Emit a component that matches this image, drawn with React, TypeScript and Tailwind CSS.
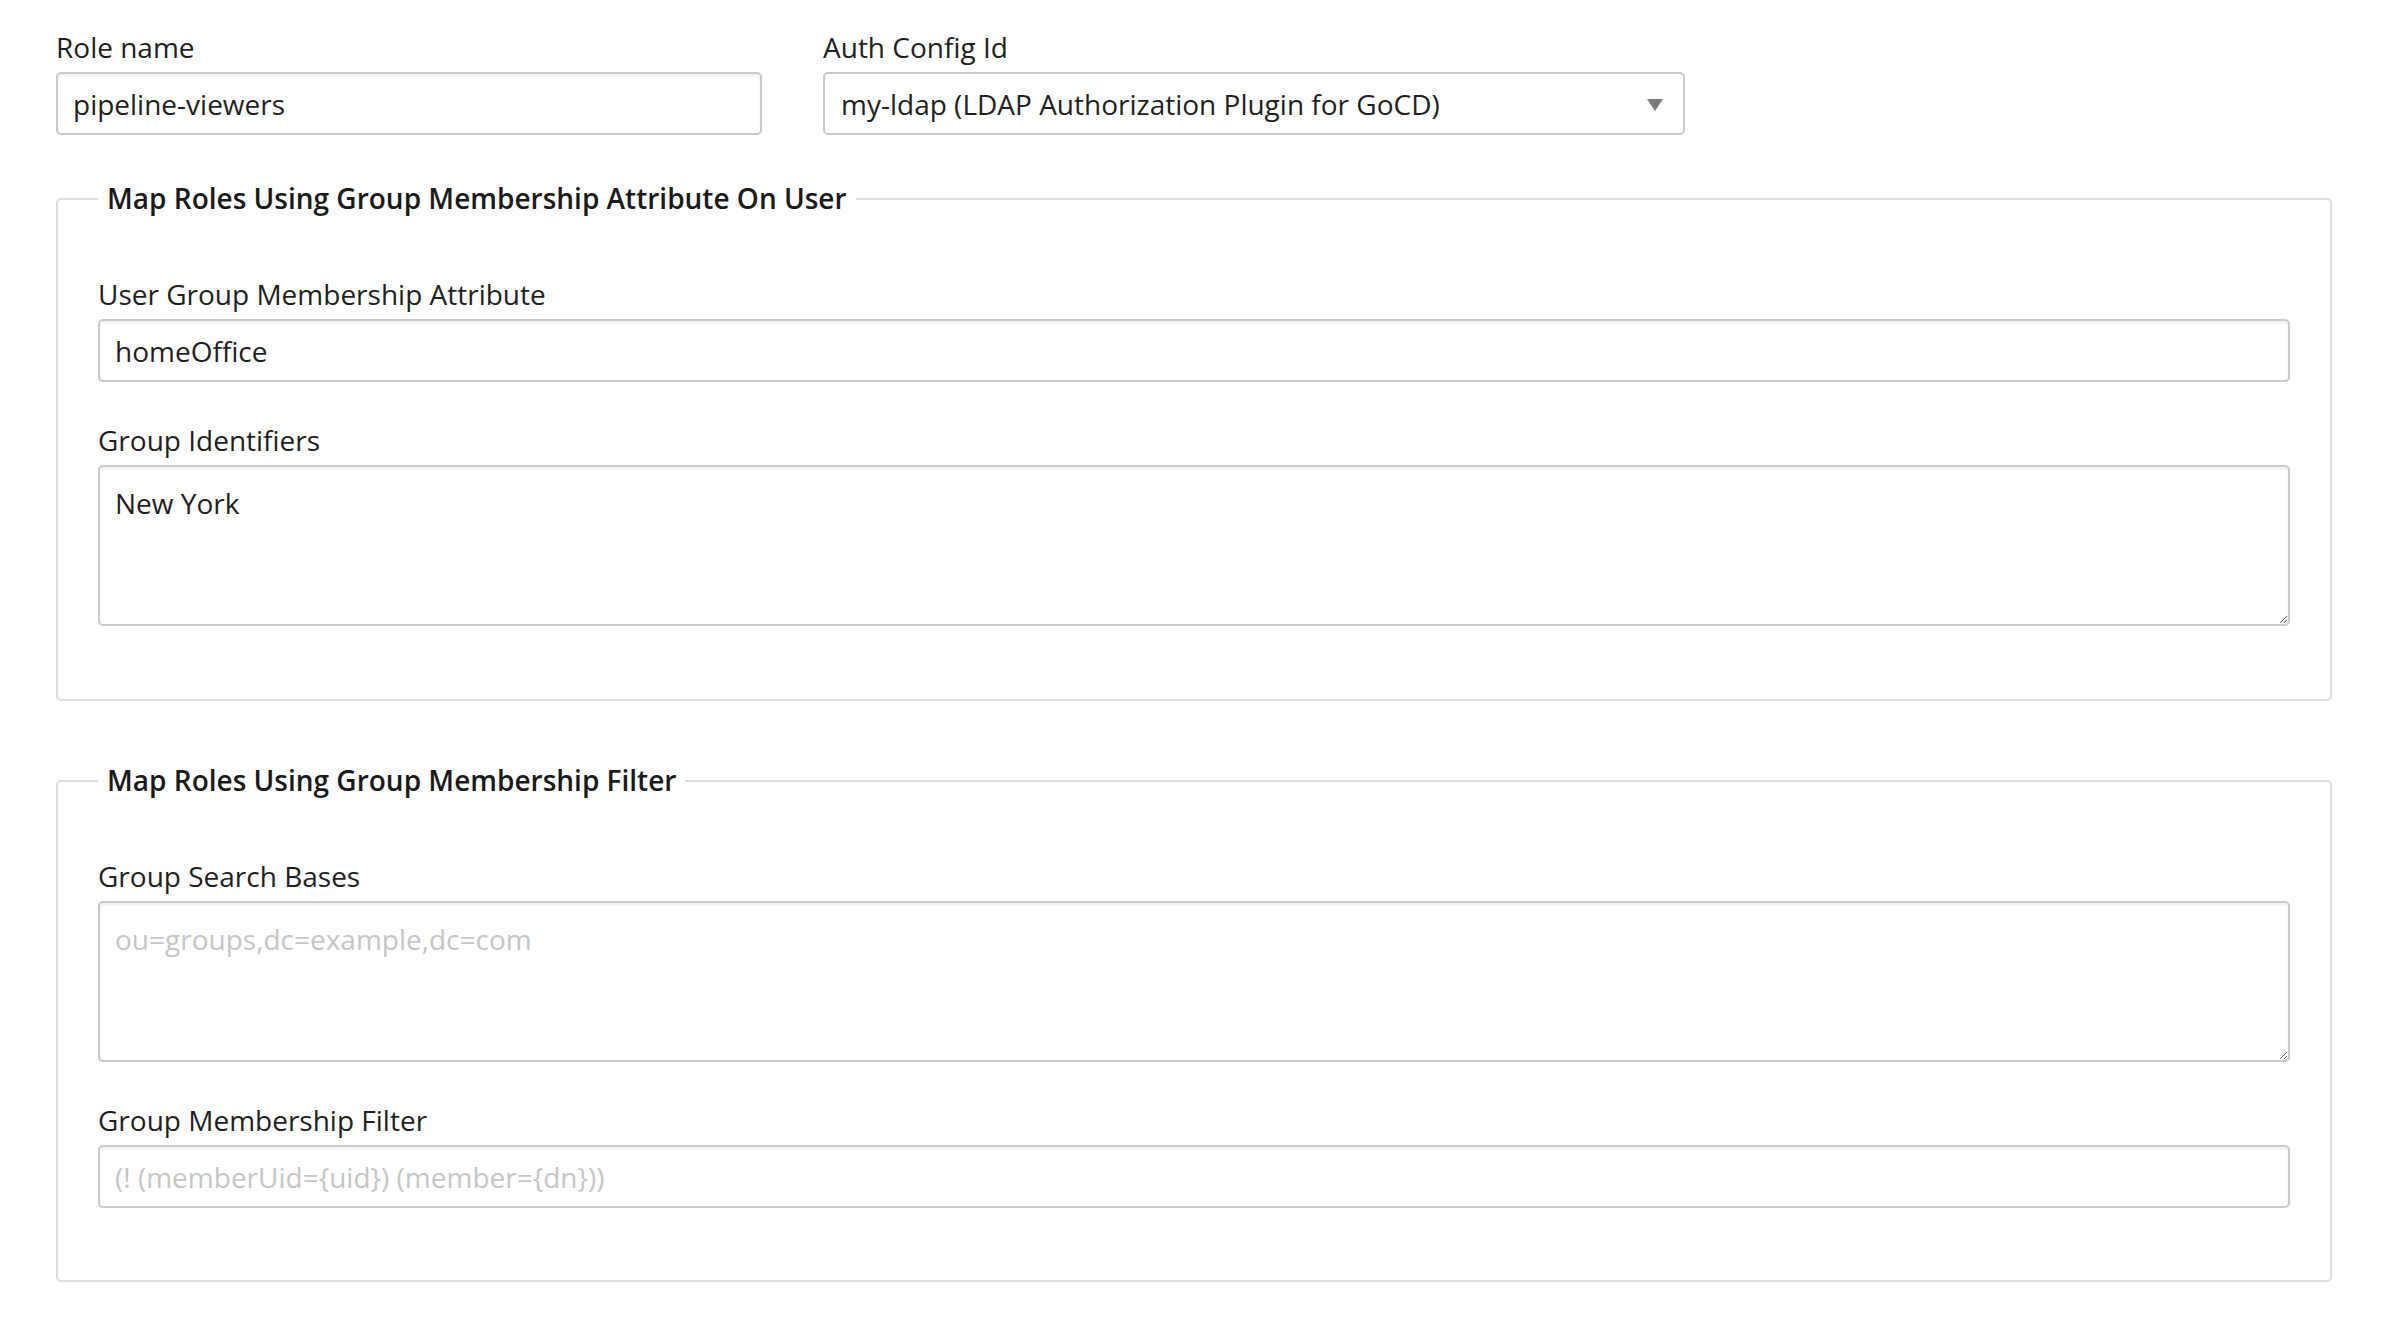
import React from "react";

const font = { fontFamily: '"Open Sans", "Noto Sans", "Liberation Sans", sans-serif' };

function Label({ children }: { children: React.ReactNode }) {
  return (
    <label className="block text-[28px] leading-[38px] text-[#1f1f1f] mb-[6px]">{children}</label>
  );
}

const inputCls =
  "block w-full h-[63px] rounded-[5px] border-2 border-[#cacaca] bg-white px-[15px] text-[28px] text-[#1f1f1f] shadow-[inset_0_2px_3px_rgba(0,0,0,0.07)] outline-none placeholder:text-[#c6c6c6]";

const textareaCls =
  "block w-full h-[161px] rounded-[5px] border-2 border-[#cacaca] bg-white px-[15px] py-[17px] text-[28px] leading-[38px] text-[#1f1f1f] shadow-[inset_0_2px_3px_rgba(0,0,0,0.07)] outline-none placeholder:text-[#c6c6c6]";

function Fieldset({
  legend,
  pb,
  children,
}: {
  legend: string;
  pb: string;
  children: React.ReactNode;
}) {
  return (
    <fieldset className={`border-2 border-[#dedede] rounded-[5px] px-[40px] pt-[57px] ${pb}`}>
      <legend className="px-[9px] text-[28px] leading-[39px] font-semibold text-[#1a1a1a]">{legend}</legend>
      <div className="flex flex-col gap-[39px]">{children}</div>
    </fieldset>
  );
}

export default function App() {
  return (
    <div className="min-h-screen w-full bg-white pl-[56px] pr-[54px] pt-[28px]" style={font}>
      <div className="flex gap-[61px]">
        <div className="w-[706px]">
          <Label>Role name</Label>
          <input className={inputCls} defaultValue="pipeline-viewers" />
        </div>
        <div className="w-[862px]">
          <Label>Auth Config Id</Label>
          <div className="relative">
            <select
              className="block w-full h-[63px] appearance-none rounded-[5px] border-2 border-[#cacaca] bg-white pl-[16px] pr-[50px] text-[28px] text-[#1f1f1f] outline-none"
              defaultValue="my-ldap"
            >
              <option value="my-ldap">my-ldap (LDAP Authorization Plugin for GoCD)</option>
            </select>
            <svg
              className="pointer-events-none absolute right-[22px] top-[27px]"
              width="16"
              height="12"
              viewBox="0 0 16 12"
            >
              <polygon points="0,0 16,0 8,12" fill="#7b7b7b" />
            </svg>
          </div>
        </div>
      </div>

      <div className="mt-[44px] flex flex-col gap-[60px]">
        <Fieldset legend="Map Roles Using Group Membership Attribute On User" pb="pb-[73px]">
          <div>
            <Label>User Group Membership Attribute</Label>
            <input className={inputCls} defaultValue="homeOffice" />
          </div>
          <div>
            <Label>Group Identifiers</Label>
            <textarea className={textareaCls} defaultValue="New York" />
          </div>
        </Fieldset>

        <Fieldset legend="Map Roles Using Group Membership Filter" pb="pb-[72px]">
          <div>
            <Label>Group Search Bases</Label>
            <textarea className={textareaCls} placeholder="ou=groups,dc=example,dc=com" />
          </div>
          <div>
            <Label>Group Membership Filter</Label>
            <input className={inputCls} placeholder="(! (memberUid={uid}) (member={dn}))" />
          </div>
        </Fieldset>
      </div>
    </div>
  );
}
